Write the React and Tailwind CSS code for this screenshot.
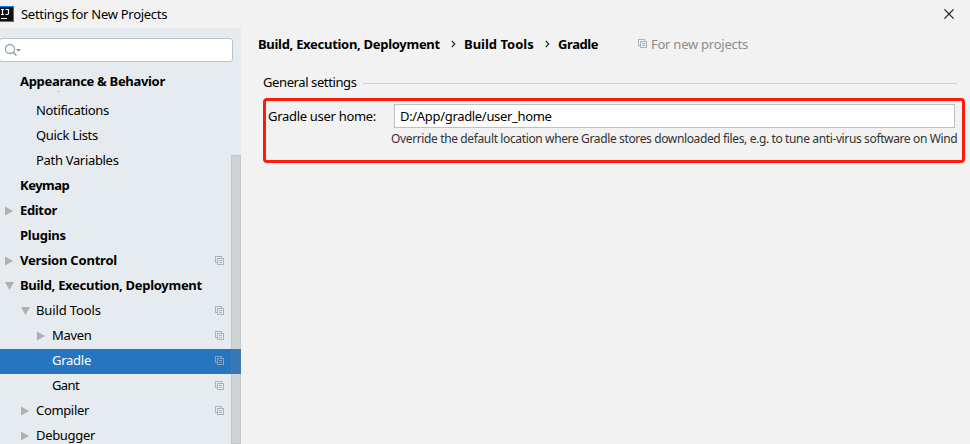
const FONT = "font-['Noto_Sans','Open_Sans',sans-serif]";

function CopyIcon({ className = '' }) {
  return (
    <svg width="9" height="9" viewBox="0 0 9 9" fill="none" shapeRendering="crispEdges" className={'shrink-0 ' + className}>
      <path d="M2 6.5H.5V.5H6.5V2" stroke="currentColor" />
      <path d="M2.5 2.5H8.5V8.5H2.5Z" stroke="currentColor" />
      <path d="M4 4.5H7M4 6.5H7" stroke="currentColor" />
    </svg>
  );
}

function Arrow({ open }) {
  return (
    <svg width="10" height="10" viewBox="0 0 10 10" className="shrink-0">
      {open ? <path d="M1 1H10L5.5 9Z" fill="#afafaf" /> : <path d="M1 0.5V9.5L9 5Z" fill="#afafaf" />}
    </svg>
  );
}

const rows = [
  { label: 'Notifications', pad: 'pl-[20px]', track: 'tracking-[-0.34px]' },
  { label: 'Quick Lists', pad: 'pl-[20px]', track: 'tracking-[-0.32px]' },
  { label: 'Path Variables', pad: 'pl-[20px]', track: 'tracking-[-0.32px]' },
  { label: 'Keymap', pad: 'pl-[4px]', bold: true, track: 'tracking-[-0.5px]' },
  { label: 'Editor', pad: 'pl-[4px]', bold: true, arrow: 'closed', track: 'tracking-[-0.35px]' },
  { label: 'Plugins', pad: 'pl-[4px]', bold: true, track: 'tracking-[-0.24px]' },
  { label: 'Version Control', pad: 'pl-[4px]', bold: true, arrow: 'closed', copy: true, track: 'tracking-[-0.22px]' },
  { label: 'Build, Execution, Deployment', pad: 'pl-[4px]', bold: true, arrow: 'open', track: 'tracking-[-0.29px]' },
  { label: 'Build Tools', pad: 'pl-[20px]', arrow: 'open', copy: true, track: 'tracking-[-0.13px]' },
  { label: 'Maven', pad: 'pl-[36px]', arrow: 'closed', copy: true, track: 'tracking-[-0.3px]' },
  { label: 'Gradle', pad: 'pl-[36px]', copy: true, selected: true, track: 'tracking-[-0.25px]' },
  { label: 'Gant', pad: 'pl-[36px]', copy: true, track: 'tracking-[-0.6px]' },
  { label: 'Compiler', pad: 'pl-[20px]', arrow: 'closed', copy: true, track: 'tracking-[-0.34px]' },
  { label: 'Debugger', pad: 'pl-[20px]', arrow: 'closed', track: 'tracking-[-0.32px]' },
];

function Row({ row }) {
  return (
    <div className={`flex h-[25px] shrink-0 items-center pr-[17px] pb-[2px] ${row.pad} ${row.selected ? 'bg-[#2675bf] text-white' : ''}`}>
      <span className="flex w-4 shrink-0">{row.arrow && <Arrow open={row.arrow === 'open'} />}</span>
      <span className={`relative -top-px grow ${row.bold ? 'font-bold' : ''} ${row.track}`}>{row.label}</span>
      {row.copy && <CopyIcon className={row.selected ? 'text-[#8ba4b8]' : 'text-[#a9b5bc]'} />}
    </div>
  );
}

function Sidebar() {
  return (
    <aside className="relative flex w-[241px] shrink-0 flex-col overflow-hidden bg-[#e6ebef]">
      <div className="mt-[10px] -ml-px flex h-[24px] w-[234px] shrink-0 items-center rounded-[3px] border border-[#c0c0c0] bg-white pl-[5px]">
        <svg width="17" height="14" viewBox="0 0 17 14" fill="none">
          <circle cx="5" cy="6" r="4.5" stroke="#9aa5ab" strokeWidth="1.3" />
          <path d="M8.3 9.3L11.5 12.5" stroke="#9aa5ab" strokeWidth="1.7" />
          <path d="M11 6H16L13.5 8.8Z" fill="#89949a" />
        </svg>
      </div>
      <div className="flex h-[37px] shrink-0 items-center pl-5 font-bold">
        <span className="tracking-[-0.32px]">Appearance &amp; Behavior</span>
      </div>
      {rows.map((row) => <Row key={row.label} row={row} />)}
      <div className="absolute top-[127px] right-0 bottom-0 w-[10px] border border-[#80808020] bg-[#80808038]" />
      <div className="absolute top-[63px] left-[58px] size-px bg-[#9c9c9c]" />
    </aside>
  );
}

function Chevron() {
  return (
    <svg width="5" height="8" viewBox="0 0 5 8" fill="none">
      <path d="M.8 .8L3.7 4L.8 7.2" stroke="#222" strokeWidth="1.2" />
    </svg>
  );
}

function Main() {
  return (
    <main className="flex min-w-0 grow flex-col">
      <div className="flex h-[33px] items-center pb-[2px] pl-[17px] font-bold">
        <span className="w-[193px] tracking-[-0.29px]">Build, Execution, Deployment</span>
        <span className="flex w-[13px]"><Chevron /></span>
        <span className="w-[81px]">Build Tools</span>
        <span className="flex w-[13px]"><Chevron /></span>
        <span className="w-[80px] tracking-[-0.4px]">Gradle</span>
        <CopyIcon className="text-[#a9b5bc]" />
        <span className="ml-1 font-normal tracking-[-0.25px] text-[#8c8c8c]">For new projects</span>
      </div>
      <div className="mt-[12px] flex h-[18px] items-center pr-[13px] pl-[22px]">
        <span className="w-[100px] shrink-0 tracking-[-0.4px]">General settings</span>
        <div className="relative top-px h-px grow bg-[#d0d0d0]" />
      </div>
      <section className="mt-[7px] ml-[22px] h-[65px] w-[702px] rounded-[4px] border-[3px] border-[#fe1b0e] pt-[3px]">
        <div className="flex items-center pl-[2px]">
          <span className="w-[126px] shrink-0 pb-[1px] tracking-[-0.3px]">Gradle user home:</span>
          <div className="flex h-[24px] w-[561px] items-center border border-[#c0c0c0] bg-white pb-[1px] pl-[5px]">
            <span className="tracking-[-0.32px]">D:/App/gradle/user_home</span>
          </div>
        </div>
        <div className="ml-[125px] h-[22px] w-[566px] overflow-hidden text-[12px] leading-[22px] tracking-[-0.37px] whitespace-nowrap text-[#333]">
          <span>Override the default location where Gradle stores downloaded files, e.g. to tune anti-virus software on Windows</span>
        </div>
      </section>
    </main>
  );
}

export default function App() {
  return (
    <div className={`${FONT} flex h-[444px] w-[970px] flex-col overflow-hidden bg-[#f2f2f2] text-[13px] leading-[18px] whitespace-nowrap text-black`}>
      <header className="flex h-[28px] shrink-0 items-center">
        <svg width="14" height="16" viewBox="0 0 14 16" fill="none">
          <path d="M0 0H14V16H0Z" fill="#087cfa" />
          <path d="M0 1H13V15H0Z" fill="#111" />
          <path d="M1 3.5H4M2.5 3.5V8.5M1 8.5H4M5.5 3.5H8.5V7.5L7.7 8.5H5.5M1 12.5H7" stroke="white" strokeWidth="1.2" />
        </svg>
        <span className="ml-[7px] grow tracking-[-0.28px]">Settings for New Projects</span>
        <svg width="10" height="10" viewBox="0 0 10 10" className="mr-4">
          <path d="M.4 .4L9.6 9.6M9.6 .4L.4 9.6" stroke="#111" strokeWidth="1.1" />
        </svg>
      </header>
      <div className="flex min-h-0 grow">
        <Sidebar />
        <Main />
      </div>
    </div>
  );
}
